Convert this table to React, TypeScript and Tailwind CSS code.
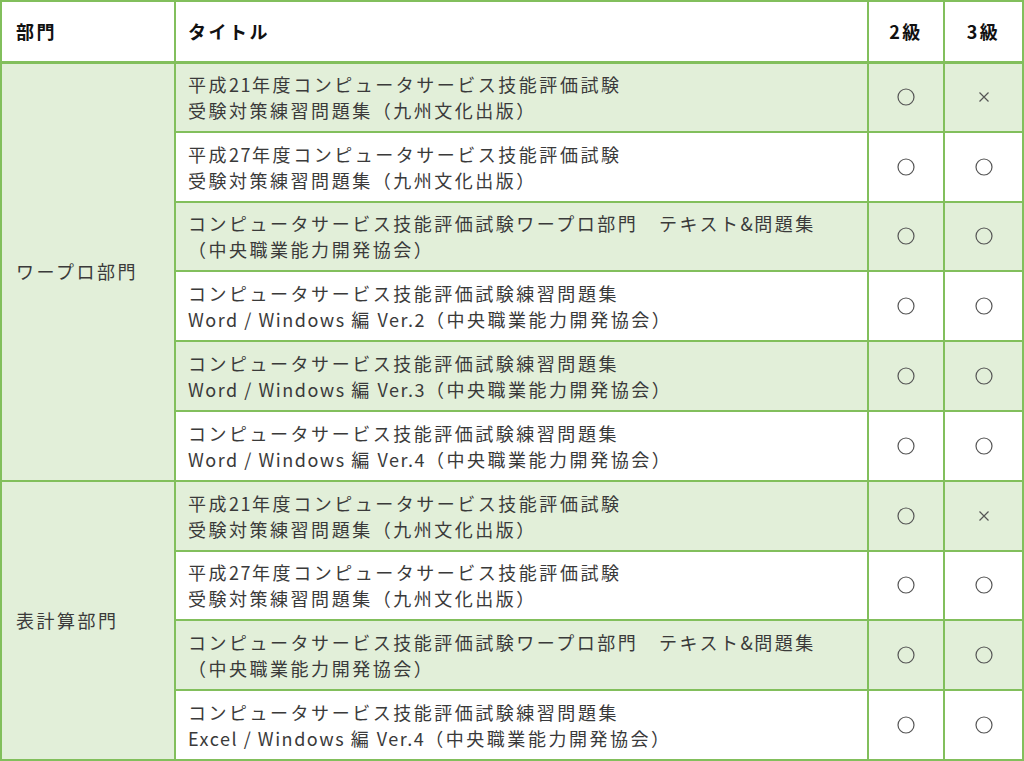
const rows1 = [
  { t: ["平成21年度コンピュータサービス技能評価試験", "受験対策練習問題集（九州文化出版）"], g2: "○", g3: "×" },
  { t: ["平成27年度コンピュータサービス技能評価試験", "受験対策練習問題集（九州文化出版）"], g2: "○", g3: "○" },
  { t: ["コンピュータサービス技能評価試験ワープロ部門　テキスト&問題集", "（中央職業能力開発協会）"], g2: "○", g3: "○" },
  { t: ["コンピュータサービス技能評価試験練習問題集", "Word / Windows 編 Ver.2（中央職業能力開発協会）"], g2: "○", g3: "○" },
  { t: ["コンピュータサービス技能評価試験練習問題集", "Word / Windows 編 Ver.3（中央職業能力開発協会）"], g2: "○", g3: "○" },
  { t: ["コンピュータサービス技能評価試験練習問題集", "Word / Windows 編 Ver.4（中央職業能力開発協会）"], g2: "○", g3: "○" },
];

const rows2 = [
  { t: ["平成21年度コンピュータサービス技能評価試験", "受験対策練習問題集（九州文化出版）"], g2: "○", g3: "×" },
  { t: ["平成27年度コンピュータサービス技能評価試験", "受験対策練習問題集（九州文化出版）"], g2: "○", g3: "○" },
  { t: ["コンピュータサービス技能評価試験ワープロ部門　テキスト&問題集", "（中央職業能力開発協会）"], g2: "○", g3: "○" },
  { t: ["コンピュータサービス技能評価試験練習問題集", "Excel / Windows 編 Ver.4（中央職業能力開発協会）"], g2: "○", g3: "○" },
];

type Row = { t: string[]; g2: string; g3: string };

const cell = "border-2 border-[#82bf5c]";

// latin runs get tighter tracking than the kana/kanji
const Line = ({ s }: { s: string }) => {
  const parts = s.match(/[\x20-\x7e]+|[^\x20-\x7e]+/g) ?? [];
  return (
    <div className="whitespace-nowrap">
      {parts.map((p, i) =>
        /^[\x20-\x7e]+$/.test(p) ? (
          <span key={i} className="tracking-[0.085em]">{p}</span>
        ) : (
          <span key={i}>{p}</span>
        )
      )}
    </div>
  );
};

const Mark = ({ v }: { v: string }) =>
  v === "○" ? (
    <svg width="18" height="18" viewBox="0 0 18 18" className="mx-auto block">
      <circle cx="9" cy="9" r="8" fill="none" stroke="#555" strokeWidth="1.2" />
    </svg>
  ) : (
    <svg width="12" height="12" viewBox="0 0 12 12" className="mx-auto block">
      <path d="M1.5 1.5 L10.5 10.5 M10.5 1.5 L1.5 10.5" stroke="#555" strokeWidth="1.2" />
    </svg>
  );

const Group = ({ name, rows }: { name: string; rows: Row[] }) => (
  <>
    {rows.map((r, i) => {
      const bg = i % 2 === 0 ? "bg-[#e2efd9]" : "bg-white";
      return (
        <tr key={i} className="h-[69.8px]">
          {i === 0 && (
            <td rowSpan={rows.length} className={`${cell} bg-[#e2efd9] pl-[14px] align-middle`}>
              {name}
            </td>
          )}
          <td className={`${cell} ${bg} pl-[12px] leading-[26px]`}>
            {r.t.map((l, j) => (
              <Line key={j} s={l} />
            ))}
          </td>
          <td className={`${cell} ${bg}`}>
            <Mark v={r.g2} />
          </td>
          <td className={`${cell} ${bg}`}>
            <Mark v={r.g3} />
          </td>
        </tr>
      );
    })}
  </>
);

export default function App() {
  return (
    <div
      className="w-[1024px] h-[761px] bg-white overflow-hidden"
      style={{ fontFamily: '"Noto Sans CJK JP", "Noto Sans", sans-serif' }}
    >
      <table className="w-[1022px] table-fixed border-collapse text-[18px] tracking-[0.14em] text-[#3a3a3a]">
        <colgroup>
          <col className="w-[174px]" />
          <col className="w-[693px]" />
          <col className="w-[76px]" />
          <col className="w-[79px]" />
        </colgroup>
        <thead>
          <tr className="h-[61px] font-bold text-[#111]">
            <th className={`${cell} border-b-[3px] bg-white pl-[14px] text-left`}>部門</th>
            <th className={`${cell} border-b-[3px] bg-white pl-[12px] text-left`}>タイトル</th>
            <th className={`${cell} border-b-[3px] bg-white text-center`}>2級</th>
            <th className={`${cell} border-b-[3px] bg-white text-center`}>3級</th>
          </tr>
        </thead>
        <tbody>
          <Group name="ワープロ部門" rows={rows1} />
          <Group name="表計算部門" rows={rows2} />
        </tbody>
      </table>
    </div>
  );
}
